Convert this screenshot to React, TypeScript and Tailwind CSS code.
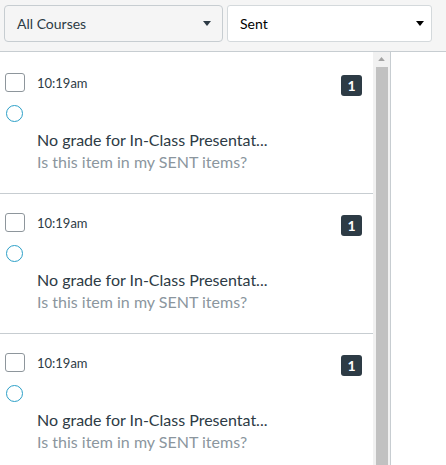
const font = { fontFamily: 'Lato, "Open Sans", sans-serif' }

function Caret({ className }: { className: string }) {
  return (
    <svg viewBox="0 0 10 6" className={className}>
      <polygon points="0,0 10,0 5,6" fill="currentColor" />
    </svg>
  )
}

function Row() {
  return (
    <div className="flex h-[140px] border-b border-[#c7cdd1]">
      <div className="w-[37px] shrink-0 pl-[5px] pt-[19px]">
        <div className="h-[19px] w-[20px] rounded-[3px] border border-[#8e969c] bg-white" />
        <div className="ml-[1px] mt-[13px] h-[17px] w-[17px] rounded-full border-[1.5px] border-[#2b9fc7]" />
      </div>
      <div className="flex-1 pt-[21px]">
        <div className="text-[13px] leading-[16px] text-[#2d3b45]">10:19am</div>
        <div className="mt-[38px] text-[16px] leading-[22px] text-[#2d3b45]">
          No grade for In-Class Presentat...
        </div>
        <div className="text-[16px] leading-[22px] text-[#8b969e]">
          Is this item in my SENT items?
        </div>
      </div>
      <div className="pr-[11px] pt-[21px]">
        <div className="flex h-[21px] w-[21px] items-center justify-center rounded-[3px] bg-[#2d3b45] text-[14px] font-bold text-white">
          1
        </div>
      </div>
    </div>
  )
}

export default function App() {
  return (
    <div className="h-[465px] w-[446px] overflow-hidden bg-white" style={font}>
      <div className="flex h-[52px] gap-[4px] border-b border-[#c7cdd1] bg-[#f5f5f5] pl-[4px] pt-[5px]">
        <div className="flex h-[37px] w-[219px] items-center justify-between rounded-[4px] border border-[#c7cdd1] bg-[#f5f5f5] pl-[12px] pr-[11px] text-[14px] text-[#2d3b45]">
          <span>All Courses</span>
          <Caret className="h-[5px] w-[8px] text-[#2d3b45]" />
        </div>
        <div className="flex h-[37px] w-[205px] items-center justify-between rounded-[3px] border border-[#d4d9dc] bg-white pl-[12px] pr-[7px] text-[14px] text-black">
          <span>Sent</span>
          <Caret className="h-[7px] w-[8px] text-black" />
        </div>
      </div>
      <div className="flex">
        <div className="flex w-[391px] border-r border-[#c7cdd1]">
          <div className="w-[373px] pt-[2px]">
            <Row />
            <Row />
            <Row />
          </div>
          <div className="flex w-[17px] flex-col items-center bg-[#f1f1f1] pt-[5px]">
            <Caret className="h-[4px] w-[7px] rotate-180 text-[#a3a3a3]" />
            <div className="mt-[6px] h-[420px] w-[12px] bg-[#c1c1c1]" />
          </div>
        </div>
      </div>
    </div>
  )
}
